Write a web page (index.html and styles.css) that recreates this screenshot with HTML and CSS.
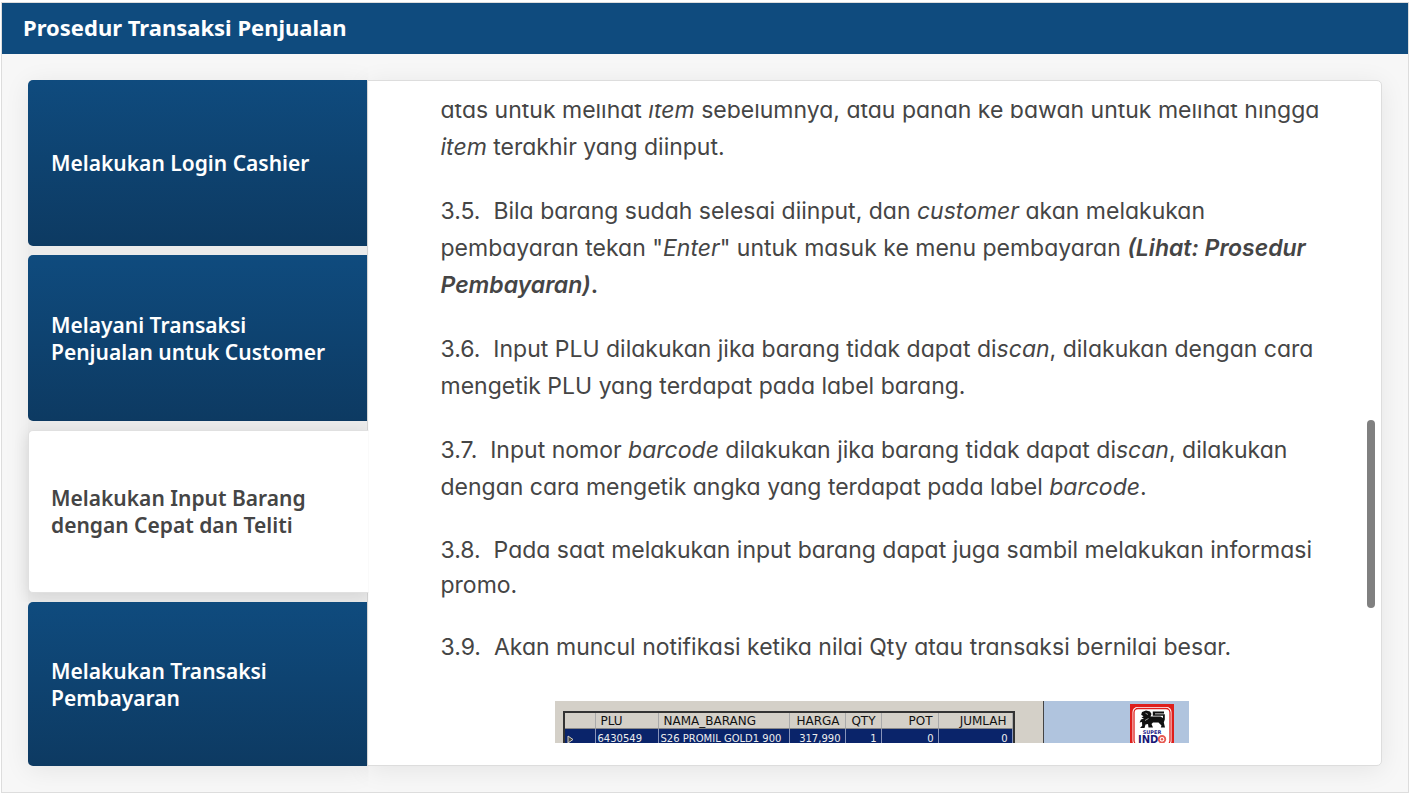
FILE: index.html
```
<!DOCTYPE html>
<html lang="id">
<head>
<meta charset="utf-8">
<meta name="viewport" content="width=device-width, initial-scale=1">
<title>Prosedur Transaksi Penjualan</title>
<link rel="stylesheet" href="styles.css">
</head>
<body>
<div class="frame">
  <header class="header"><h1 class="title">Prosedur Transaksi Penjualan</h1></header>
  <main class="main">
    <nav class="tabs" role="tablist" aria-label="Prosedur">
      <button class="tab" type="button" role="tab" aria-selected="false">Melakukan Login Cashier</button>
      <button class="tab" type="button" role="tab" aria-selected="false">Melayani Transaksi<br>Penjualan untuk Customer</button>
      <button class="tab tab-active" type="button" role="tab" id="tab-input" aria-controls="panel" aria-selected="true">Melakukan Input Barang<br>dengan Cepat dan Teliti</button>
      <button class="tab" type="button" role="tab" aria-selected="false">Melakukan Transaksi<br>Pembayaran</button>
    </nav>
    <section class="panel" id="panel" role="tabpanel" aria-labelledby="tab-input">
      <div class="viewport">
        <div class="content">
          <p class="step">atas untuk melihat <em>item</em> sebelumnya, atau panah ke bawah untuk melihat hingga<br><em>item</em> terakhir yang diinput.</p>
          <p class="step">3.5.&nbsp; Bila barang sudah selesai diinput, dan <em>customer</em> akan melakukan<br>pembayaran tekan "<em>Enter</em>" untuk masuk ke menu pembayaran <em class="strong">(Lihat: Prosedur<br>Pembayaran)</em><b class="strong">.</b></p>
          <p class="step">3.6.&nbsp; Input PLU dilakukan jika barang tidak dapat di<em>scan</em>, dilakukan dengan cara<br>mengetik PLU yang terdapat pada label barang.</p>
          <p class="step">3.7.&nbsp; Input nomor <em>barcode</em> dilakukan jika barang tidak dapat di<em>scan</em>, dilakukan<br>dengan cara mengetik angka yang terdapat pada label <em>barcode</em>.</p>
          <p class="step step-plain">3.8.&nbsp; Pada saat melakukan input barang dapat juga sambil melakukan informasi<br>promo.</p>
          <p class="step step-plain">3.9.&nbsp; Akan muncul notifikasi ketika nilai Qty atau transaksi bernilai besar.</p>
          <figure class="pos">
            <div class="pos-sheet">
              <table class="pos-table">
                <colgroup><col class="c-mark"><col class="c-plu"><col class="c-name"><col class="c-price"><col class="c-qty"><col class="c-pot"><col class="c-total"></colgroup>
                <thead><tr><th></th><th>PLU</th><th>NAMA_BARANG</th><th class="num">HARGA</th><th class="num">QTY</th><th class="num">POT</th><th class="num">JUMLAH</th></tr></thead>
                <tbody><tr><td><svg class="marker" viewBox="0 0 7 9" aria-hidden="true"><path d="M1 1 6 4.500 1 8Z" fill="#4a4a40" stroke="#d4d0c8"/></svg></td><td>6430549</td><td>S26 PROMIL GOLD1 900</td><td class="num">317,990</td><td class="num">1</td><td class="num">0</td><td class="num">0</td></tr></tbody>
              </table>
            </div>
            <div class="pos-side">
              <svg class="logo" viewBox="0 0 44 44" role="img" aria-label="Super Indo">
                <rect width="44" height="44" fill="#de1f1c"/>
                <rect x="2.500" y="3" width="39" height="39" rx="5" fill="#fff"/>
                <rect x="4" y="4.500" width="36" height="36" rx="4" fill="none" stroke="#de1f1c" stroke-width="1.300"/>
                <path fill="#111" d="M12 8 16 6.500 20 7.500 21.500 10 20.500 12.500H30.500L33 14V11.800H22.800V7.600H34V9.500H25V10.300H34.800V15.500L33.800 18.500 35 23.500H30.800L31.500 21.500 28.500 18.500H23L21.500 20 23 23.500H18.500L18 20 15.500 20.500 14.500 24H10L12.200 21.800 12 18 9.500 18.500 11 15.500 14 14.500 11.500 13.500 13.500 12.200 11.200 10.800Z"/>
                <path d="M15.500 9.200 18 10.500M15 16.500 18.500 14.500" stroke="#fff" stroke-width=".6"/>
                <text class="logo-super" x="22" y="29.500" text-anchor="middle">SUPER</text>
                <text class="logo-indo" x="8" y="39">IND</text>
                <circle cx="32" cy="35.300" r="3.300" fill="#fff" stroke="#e65a52" stroke-width="1.800"/><circle cx="32" cy="35.300" r="1.200" fill="#e65a52"/>
              </svg>
            </div>
          </figure>
        </div>
      </div>
      <div class="scroll-thumb"></div>
    </section>
  </main>
</div>
</body>
</html>
```
FILE: styles.css
```
* { box-sizing: border-box; }
body { margin: 0; background: #fff; color: #454545; font-family: "Noto Sans", sans-serif; }
.frame { display: flex; flex-direction: column; height: calc(100vh - 3px); margin: 2px 1px 1px 1px; border: 1px solid #ddd; background: #f7f7f7; overflow: hidden; }
.header { flex: none; padding: 9px 21px 12px; background: #0f4b7e; }
.title { margin: 0; color: #fff; font: 700 22px/30px "Noto Sans", sans-serif; }
.main { flex: 1; display: flex; min-height: 0; padding: 26px; }
.tabs { position: relative; z-index: 1; flex: 0 0 25%; min-width: 0; display: grid; grid-template-rows: 166fr 167fr 163fr 164fr; gap: 9px; box-shadow: 0 4px 26px rgba(0,0,0,.08); clip-path: inset(-26px -2px -30px -26px); background: #ebebeb; border-radius: 5px 0 0 5px; }
.tab { padding: 2px 23px 0; border: 0; border-radius: 5px 0 0 5px; background: linear-gradient(#0f4b7e, #0d3a62); color: #fff; font: 600 21px/27px "Noto Sans", sans-serif; text-align: left; }
.tab-active { position: relative; z-index: 1; margin-right: -2px; padding: 0 22px; border: 1px solid #e0e0e0; border-right: 0; background: #fff; color: #454545; box-shadow: 0 4px 16px rgba(0,0,0,.1); clip-path: inset(-20px 0 -9px -26px); }
.panel { position: relative; flex: 1; min-width: 0; padding: 23px 0 22px; border: 1px solid #ddd; border-radius: 0 5px 5px 0; background: #fff; box-shadow: 0 4px 26px rgba(0,0,0,.08); }
.viewport { height: 100%; overflow: hidden; }
.content { display: flex; flex-direction: column; gap: 27px; margin-top: -12px; padding: 0 40px 0 73px; }
.step { margin: 0; font: 400 23px/37px Inter, sans-serif; font-feature-settings: "cv11"; white-space: nowrap; }
.step-plain { line-height: 35px; }
.strong { font-weight: 600; }
.scroll-thumb { position: absolute; right: 6px; top: 49.500%; width: 8px; height: 27.500%; border-radius: 4px; background: #808080; }
.pos { display: flex; width: 634px; margin: 9px 0 0 114px; background: #d4d0c8; }
.pos-sheet { flex: 1; padding: 10px 0 20px 8px; border-right: 1px solid #444; }
.pos-side { width: 145px; padding: 3px 0 0 86px; background: #b0c4de; }
.logo { display: block; width: 44px; height: 44px; }
.logo-super { font: 700 5px "DejaVu Sans", sans-serif; fill: #22228a; }
.logo-indo { font: 700 10px "DejaVu Sans", sans-serif; fill: #191978; }
.pos-table { width: 452px; table-layout: fixed; border-collapse: separate; border-spacing: 0; border: 2px solid #333; font: 10px/14px "DejaVu Sans", sans-serif; white-space: nowrap; }
.c-mark { width: 31px; } .c-plu { width: 63px; } .c-name { width: 131px; } .c-price { width: 56px; } .c-qty { width: 36px; } .c-pot { width: 57px; } .c-total { width: 74px; }
.pos-table th { height: 16px; padding: 1px 5px 0; border-right: 1px solid #aaa; border-bottom: 1px solid #888; color: #111; font-size: 12px; font-weight: 400; text-align: left; }
.pos-table td { height: 18px; padding: 2px 4px 0 2px; border-right: 1px solid #8894ba; background: #0a246a; color: #eee; text-align: left; }
.pos-table .num { text-align: right; padding-left: 0; }
.marker { display: block; width: 7px; height: 9px; }
```
